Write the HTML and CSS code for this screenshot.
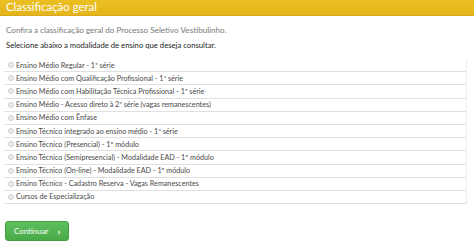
FILE: index.html
```html
<!DOCTYPE html>
<html lang="pt">
<head>
<meta charset="utf-8">
<link rel="stylesheet" href="styles.css">
</head>
<body>
<div class="header"><h1 class="title">Classificação geral</h1></div>
<div class="content">
  <p class="lead">Confira a classificação geral do Processo Seletivo Vestibulinho.</p>
  <p class="instr">Selecione abaixo a modalidade de ensino que deseja consultar.</p>
  <ul class="list">
    <li class="item"><span class="radio"></span>Ensino Médio Regular - 1ª série</li>
    <li class="item"><span class="radio"></span>Ensino Médio com Qualificação Profissional - 1ª série</li>
    <li class="item"><span class="radio"></span>Ensino Médio com Habilitação Técnica Profissional - 1ª série</li>
    <li class="item"><span class="radio"></span>Ensino Médio - Acesso direto à 2ª série (vagas remanescentes)</li>
    <li class="item"><span class="radio"></span>Ensino Médio com Ênfase</li>
    <li class="item"><span class="radio"></span>Ensino Técnico integrado ao ensino médio - 1ª série</li>
    <li class="item"><span class="radio"></span>Ensino Técnico (Presencial) - 1º módulo</li>
    <li class="item"><span class="radio"></span>Ensino Técnico (Semipresencial) - Modalidade EAD - 1º módulo</li>
    <li class="item"><span class="radio"></span>Ensino Técnico (On-line) - Modalidade EAD - 1º módulo</li>
    <li class="item"><span class="radio"></span>Ensino Técnico - Cadastro Reserva - Vagas Remanescentes</li>
    <li class="item"><span class="radio"></span>Cursos de Especialização</li>
  </ul>
  <button class="btn">Continuar<span class="chev">›</span></button>
</div>
</body>
</html>
```
FILE: styles.css
```css
* { box-sizing: border-box; }
body {
  margin: 0;
  background: #fff;
  font-family: Lato, "Open Sans", sans-serif;
}
.header {
  height: 16px;
  background: linear-gradient(#ebbf22, #e4b51c);
  border-bottom: 1px solid #d8a91b;
  overflow: hidden;
}
.title {
  margin: 0;
  padding-left: 6px;
  font-size: 11.4px;
  font-weight: 400;
  line-height: 13px;
  color: #fff;
}
.content {
  padding: 0 7px 0 4px;
}
.lead {
  margin: 8px 0 0 2px;
  font-size: 8.1px;
  line-height: 12px;
  color: #7a7a7a;
}
.instr {
  margin: 4px 0 0 2px;
  font-size: 7.7px;
  line-height: 10px;
  color: #222;
}
.list {
  list-style: none;
  margin: 9px 0 0 0;
  padding: 0;
  border-right: 1px solid #eee;
}
.item {
  display: flex;
  align-items: center;
  height: 13.2px;
  font-size: 7.2px;
  color: #4a4a4a;
  border-bottom: 1px solid #e0e0e0;
  padding-left: 4px;
}
.radio {
  width: 6px;
  height: 6px;
  border-radius: 50%;
  border: 1px solid #cfcfcf;
  background: #ececec;
  margin-right: 2px;
}
.btn {
  display: flex;
  align-items: center;
  margin: 17px 0 0 1px;
  width: 64px;
  height: 20px;
  border: 1px solid #40a040;
  border-radius: 3px;
  background: linear-gradient(#5fbf5f, #47aa47);
  color: #fff;
  font-family: inherit;
  font-size: 7.9px;
  padding: 0 0 0 8px;
}
.chev {
  font-weight: 700;
  margin-left: 9px;
  font-size: 10px;
  line-height: 10px;
}
```
